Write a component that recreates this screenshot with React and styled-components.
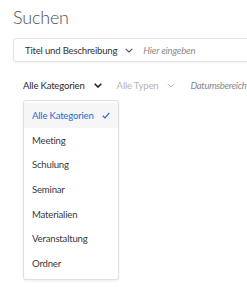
import React from "react";
import styled, { createGlobalStyle } from "styled-components";

const Global = createGlobalStyle`
  html, body { margin: 0; padding: 0; background: #fff; overflow: hidden; }
  body { font-family: Lato, "Noto Sans", sans-serif; }
`;

const Page = styled.div`
  position: relative;
  width: 247px;
  height: 287px;
  overflow: hidden;
  padding: 5px 0 0 13px;
  box-sizing: border-box;
`;

const Title = styled.h1`
  margin: 0;
  font-weight: 300;
  font-size: 18px;
  line-height: 24px;
  color: #4e4e4e;
  letter-spacing: -0.2px;
`;

const SearchBar = styled.div`
  margin-top: 9px;
  width: 260px;
  height: 24px;
  box-sizing: border-box;
  border: 1px solid #e4e4e4;
  border-right: none;
  border-radius: 3px 0 0 3px;
  box-shadow: 0 1px 2px rgba(0, 0, 0, 0.05);
  display: flex;
  align-items: center;
  padding-left: 11px;
  font-size: 9.6px;
  letter-spacing: -0.2px;
  white-space: nowrap;
`;

const FieldSelect = styled.span`
  color: #333;
  display: flex;
  align-items: center;
  gap: 8px;
  margin-right: 10px;
`;

const Placeholder = styled.span`
  color: #8c8c8c;
  font-style: italic;
`;

const Filters = styled.div`
  margin-top: 15px;
  margin-left: 10px;
  display: flex;
  align-items: center;
  font-size: 9.6px;
  letter-spacing: -0.2px;
  height: 16px;
  white-space: nowrap;
`;

const Filter = styled.span`
  display: flex;
  align-items: center;
  gap: 9px;
  margin-right: 15px;
  color: ${(p) => (p.$active ? "#2b2b2b" : "#b4b4b4")};
`;

const DateFilter = styled.span`
  color: #8a8a8a;
  font-style: italic;
  letter-spacing: -0.35px;
`;

const Menu = styled.ul`
  position: absolute;
  left: 23px;
  top: 100px;
  width: 96px;
  margin: 0;
  padding: 2px 0 3px;
  list-style: none;
  box-sizing: border-box;
  background: #fff;
  border: 1px solid #e0e0e0;
  border-radius: 3px;
  box-shadow: 0 1px 3px rgba(0, 0, 0, 0.08);
`;

const Item = styled.li`
  height: 24.7px;
  display: flex;
  align-items: center;
  justify-content: space-between;
  padding: 0 8px 0 8px;
  font-size: 9.6px;
  letter-spacing: -0.2px;
  color: ${(p) => (p.$selected ? "#2d6bd0" : "#3a3a3a")};
  background: ${(p) => (p.$selected ? "#f6f6f6" : "transparent")};
`;

const Chevron = ({ color = "#333", width = 1.4 }) => (
  <svg width="8" height="5" viewBox="0 0 8 5">
    <path d="M0.7 0.8 L4 4 L7.3 0.8" fill="none" stroke={color} strokeWidth={width} />
  </svg>
);

const Check = () => (
  <svg width="8" height="7" viewBox="0 0 8 7">
    <path d="M0.8 3.8 L3 5.9 L7.3 0.8" fill="none" stroke="#2d6bd0" strokeWidth="1.3" />
  </svg>
);

const items = [
  "Alle Kategorien",
  "Meeting",
  "Schulung",
  "Seminar",
  "Materialien",
  "Veranstaltung",
  "Ordner",
];

export default function App() {
  return (
    <>
      <Global />
      <Page>
        <Title>Suchen</Title>
        <SearchBar>
          <FieldSelect>
            Titel und Beschreibung <Chevron color="#555" width={1.1} />
          </FieldSelect>
          <Placeholder>Hier eingeben</Placeholder>
        </SearchBar>
        <Filters>
          <Filter $active>
            Alle Kategorien <Chevron color="#222" width={1.6} />
          </Filter>
          <Filter>
            Alle Typen <Chevron color="#bbb" width={1} />
          </Filter>
          <DateFilter>Datumsbereich</DateFilter>
        </Filters>
        <Menu>
          {items.map((t, i) => (
            <Item key={t} $selected={i === 0}>
              {t}
              {i === 0 && <Check />}
            </Item>
          ))}
        </Menu>
      </Page>
    </>
  );
}
